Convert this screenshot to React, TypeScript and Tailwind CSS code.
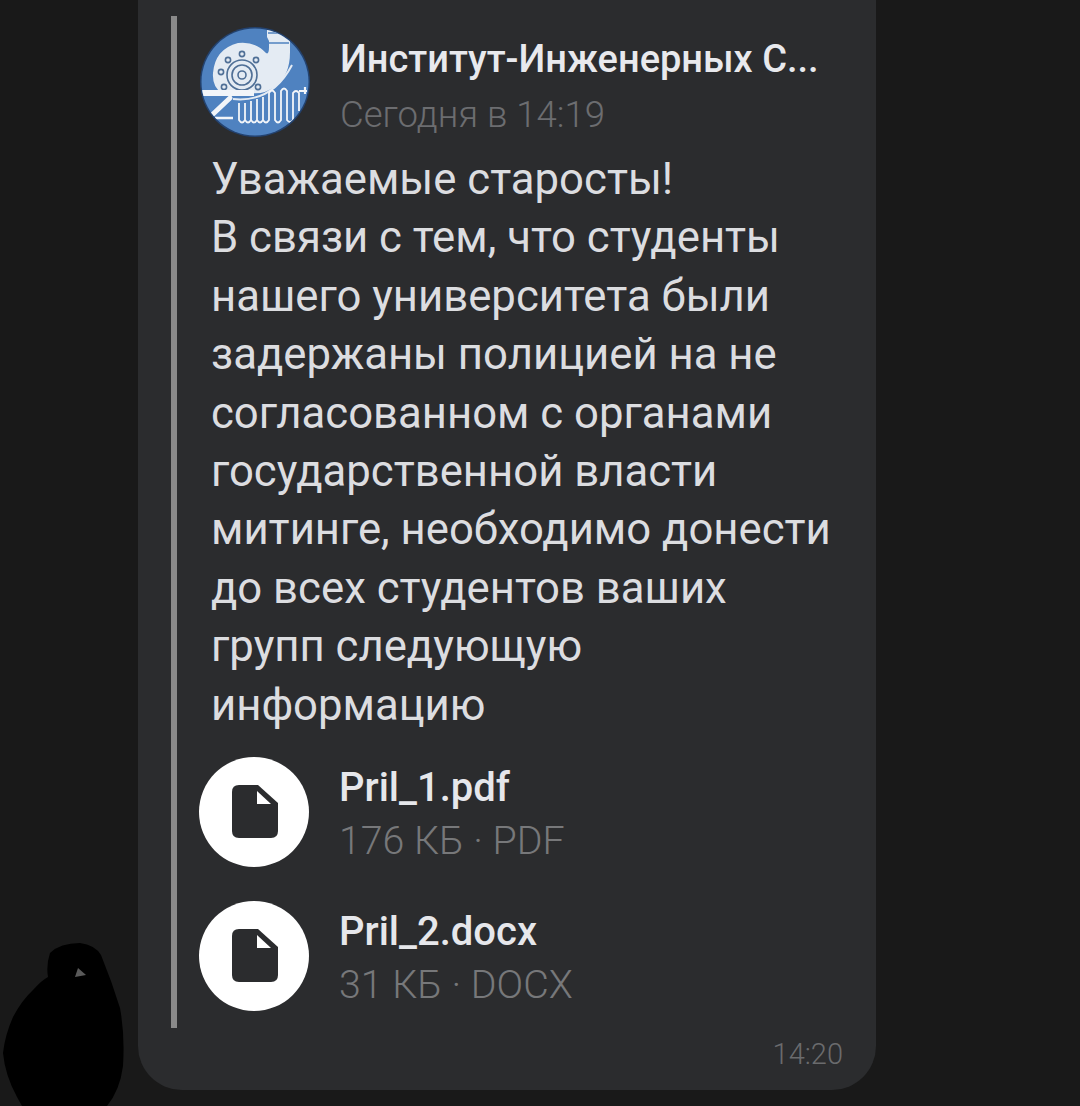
import React from "react";

const font = { fontFamily: "Roboto, sans-serif" };

function Avatar() {
  const blue = "#4f82c0";
  const pale = "#e4ebf3";
  return (
    <svg width="110" height="110" viewBox="0 0 110 110" className="block shrink-0">
      <defs>
        <clipPath id="c"><circle cx="55" cy="55" r="53.5" /></clipPath>
      </defs>
      <circle cx="55" cy="55" r="55" fill="#23426f" />
      <circle cx="55" cy="55" r="53.5" fill={blue} />
      <g clipPath="url(#c)">
        <path d="M67 0 H87 V10 L90 14 V25 Q90 48 76 59 Q64 68 50 66 H22 Q12 60 13 46 Q15 22 38 16 Q55 14 66 26 Q69 28 69 20 V14 L67 10 Z" fill={pale} />
        <path d="M69 16 H89 M68 6 H88" stroke={blue} strokeWidth="1.5" fill="none" />
        <path d="M33 72 Q72 76 92 38" stroke={pale} strokeWidth="2" fill="none" />
        <circle cx="42" cy="48" r="15" fill="none" stroke="#4f6f96" strokeWidth="1.6" />
        <circle cx="42" cy="48" r="10" fill="none" stroke="#4f6f96" strokeWidth="1.6" />
        <circle cx="42" cy="48" r="4" fill="none" stroke="#4f6f96" strokeWidth="1.6" />
        {[[42,27],[56,33],[28,33],[21,45],[24,60],[58,60]].map(([x,y],i)=>(
          <circle key={i} cx={x} cy={y} r="2.6" fill="none" stroke="#4f6f96" strokeWidth="1.6" />
        ))}
        <rect x="2" y="63" width="52" height="6" fill="#f2f5f9" />
        <path d="M30 71 L12 88" stroke="#f2f5f9" strokeWidth="5" strokeLinecap="round" />
        <path d="M15 91 H33" stroke="#f2f5f9" strokeWidth="2.5" />
        <path d="M39 76 V93 Q42 98 45 93 V76 M45 93 Q48 98 51 93 V74 M51 93 Q54 98 57 93 V72 M57 93 Q60 98 63 93 V70 M63 93 Q66 98 69 93 V66 Q72 61 75 66 V93 Q78 98 81 93 V64 Q84 59 87 64 V93 Q90 97 93 93 V66 Q96 62 99 66 V84" fill="none" stroke="#f2f5f9" strokeWidth="1.8" />
        <path d="M99 64 H107 M105 60 V67" stroke="#f2f5f9" strokeWidth="2.2" fill="none" />
      </g>
    </svg>
  );
}

function FileRow({ name, meta }: { name: string; meta: string }) {
  return (
    <div className="flex items-start h-[110px]">
      <div className="w-[110px] h-[110px] rounded-full bg-white flex items-center justify-center shrink-0">
        <svg width="48" height="54" viewBox="0 0 48 54" className="ml-[2px]">
          <path d="M8 0 H27 L47 18 V46 Q47 53 40 53 H8 Q1 53 1 46 V7 Q1 0 8 0 Z" fill="#2b2c2e" />
          <path d="M26 6 L40 19 H26 Z" fill="#fff" />
        </svg>
      </div>
      <div className="ml-[30px] flex flex-col">
        <div className="text-[40px] leading-[44px] font-medium text-[#e6e7eb] mt-[9px]">{name}</div>
        <div className="text-[39.3px] leading-[44px] font-light text-[#77787a] mt-[9px]">{meta}</div>
      </div>
    </div>
  );
}

export default function App() {
  const lines = [
    "Уважаемые старосты!",
    "В связи с тем, что студенты",
    "нашего университета были",
    "задержаны полицией на не",
    "согласованном с органами",
    "государственной власти",
    "митинге, необходимо донести",
    "до всех студентов ваших",
    "групп следующую",
    "информацию",
  ];
  return (
    <div className="relative w-[1080px] h-[1106px] overflow-hidden bg-[#191919] pl-[138px]" style={font}>
      <svg className="absolute left-0 top-[940px]" width="130" height="166" viewBox="0 0 130 166">
        <path d="M50 13 Q60 3 80 3 Q95 5 101 15 Q112 42 120 68 Q125 95 123 126 Q120 150 107 166 H22 L17 157 Q5 135 3 113 Q5 95 13 77 Q22 60 33 50 Q42 40 48 37 Q46 25 50 13 Z" fill="#000" />
        <path d="M75 37 L78 28 L86 35 Z" fill="#5a5a5a" />
      </svg>
      <div className="w-[738px] h-[1090px] rounded-b-[44px] bg-[#2b2c2e] pt-[16px] pl-[33px]">
        <div className="h-[1012px] border-l-[6px] border-[#8a8a8a] pl-[23px]">
          <div className="flex items-start pt-[11px]">
            <Avatar />
            <div className="ml-[30px] flex flex-col">
              <div className="text-[38px] leading-[44px] font-medium text-[#e8e9ed] mt-[10px] whitespace-nowrap">Институт-Инженерных С...</div>
              <div className="text-[36.5px] leading-[44px] font-light text-[#6c6d70] mt-[12px] whitespace-nowrap">Сегодня в 14:19</div>
            </div>
          </div>
          <div className="pl-[11px] mt-[13px] text-[43.7px] leading-[58.4px] text-[#dcdde0] whitespace-nowrap">
            {lines.map((l) => (
              <div key={l}>{l}</div>
            ))}
          </div>
          <div className="mt-[23px] ml-[-1px] flex flex-col gap-[34px]">
            <FileRow name="Pril_1.pdf" meta="176 КБ · PDF" />
            <FileRow name="Pril_2.docx" meta="31 КБ · DOCX" />
          </div>
        </div>
        <div className="flex justify-end pr-[33px] text-[29px] leading-[34px] font-light text-[#6a6b6d] mt-[9px]">14:20</div>
      </div>
    </div>
  );
}
